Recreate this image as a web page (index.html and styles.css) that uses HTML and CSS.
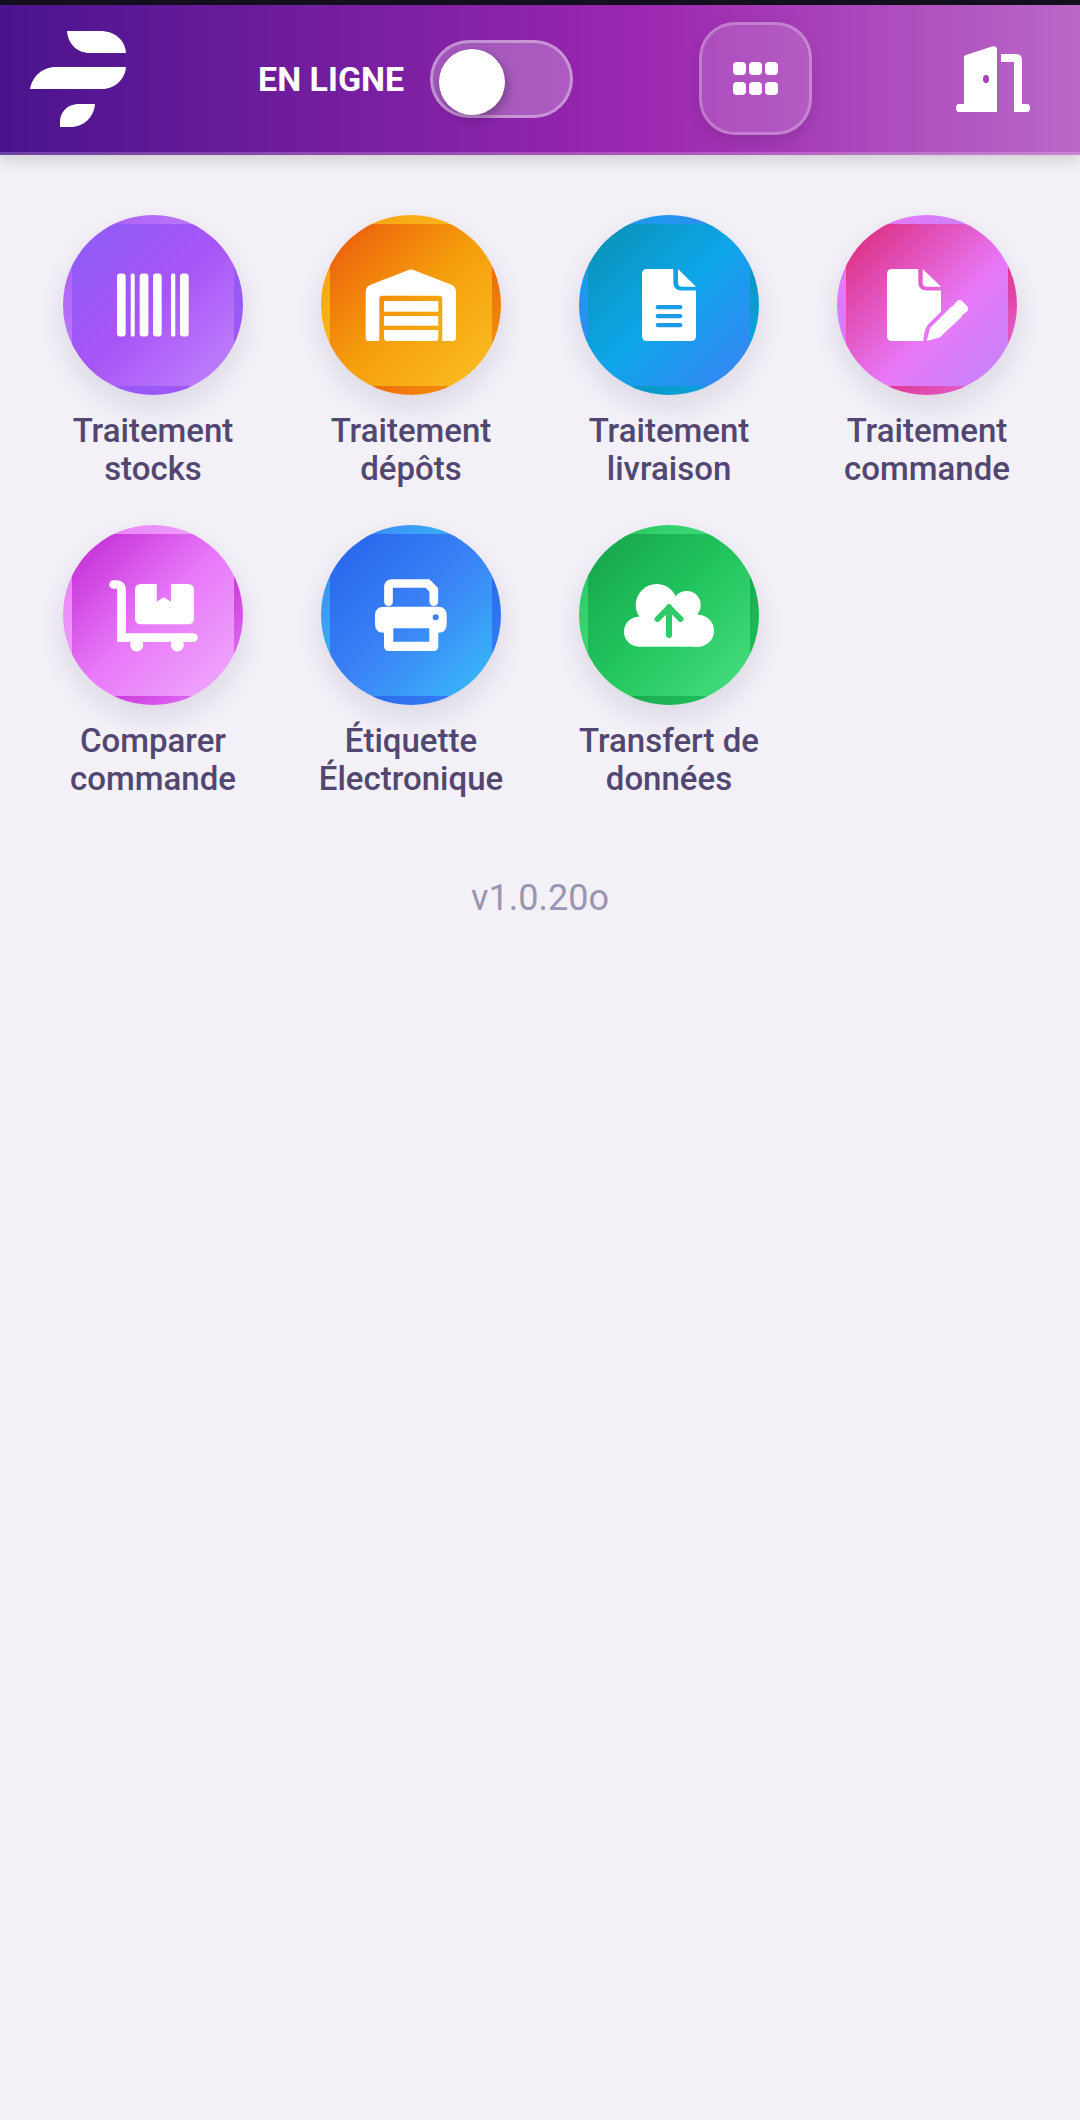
FILE: index.html
```html
<!DOCTYPE html>
<html lang="fr">
<head>
    <meta charset="UTF-8">
    <meta name="viewport" content="width=device-width, initial-scale=1.0">
    <title>Accueil</title>
    <link rel="stylesheet" href="styles.css">
</head>
<body>
    <div class="status-strip"></div>
    <header class="topbar">
        <svg class="logo" viewBox="0 0 96 96" aria-hidden="true">
            <path d="M37 0H70C85 0 95 9 96 22H60C47 22 38 13 37 0Z"/>
            <path d="M26 36H96C95 48 85 58 72 58H0C2 46 12 36 26 36Z"/>
            <path d="M65 73H47C37 74 30 81 30 91V96H40C54 96 64 86 65 73Z"/>
        </svg>
        <span class="status-label">EN LIGNE</span>
        <div class="toggle"><div class="knob"></div></div>
        <button class="menu-btn" type="button" aria-label="Menu">
            <span class="dots">
                <i></i><i></i><i></i><i></i><i></i><i></i>
            </span>
        </button>
        <svg class="door" viewBox="0 0 74 66" aria-hidden="true">
            <path d="M8 58V11Q8 9.500 10 9L36 .5Q41 -.5 41 4V66H3Q0 66 0 62Q0 58 3 58Z"/>
            <path d="M45 8H60Q66 8 66 14V58H71Q74 58 74 62Q74 66 71 66H58V16H45Z"/>
            <ellipse class="keyhole" cx="30" cy="33" rx="3" ry="4"/>
        </svg>
    </header>

    <main class="content">
        <div class="tiles">
            <a class="tile">
                <div class="circle c-stocks">
                    <svg viewBox="0 0 162 162" aria-hidden="true">
                        <rect x="45" y="49.500" width="8.700" height="63" rx="3"/>
                        <rect x="58.700" y="49.500" width="4" height="63" rx="1.500"/>
                        <rect x="67.700" y="49.500" width="8.700" height="63" rx="3"/>
                        <rect x="81" y="49.500" width="8.700" height="63" rx="3"/>
                        <rect x="99" y="49.500" width="4.300" height="63" rx="1.500"/>
                        <rect x="108" y="49.500" width="8.700" height="63" rx="3"/>
                    </svg>
                </div>
                <span class="tile-label">Traitement<br>stocks</span>
            </a>
            <a class="tile">
                <div class="circle c-depots">
                    <svg viewBox="0 0 162 162" aria-hidden="true">
                        <path d="M78.500 46L40 61Q35.700 63 35.700 68V114Q35.700 117 38.700 117H49.300V75Q49.300 71.700 52.600 71.700H109Q112.300 71.700 112.300 75V117H123Q126 117 126 114V68Q126 63 122 61L83.500 46Q81 45 78.500 46Z"/>
                        <rect x="54" y="77" width="54.300" height="10.700"/>
                        <rect x="54" y="92" width="54.300" height="9.700"/>
                        <path d="M54 106H108.300V114Q108.300 117 105.300 117H57Q54 117 54 114Z"/>
                    </svg>
                </div>
                <span class="tile-label">Traitement<br>dépôts</span>
            </a>
            <a class="tile">
                <div class="circle c-livraison">
                    <svg viewBox="0 0 162 162" aria-hidden="true">
                        <path d="M59 45H85.300V58Q85.300 66.500 93.500 66.500H108V112Q108 117 103 117H59Q54 117 54 112V50Q54 45 59 45Z"/>
                        <path d="M90 45L108 62.700H94Q90 62.700 90 59Z"/>
                        <rect class="cut" x="67.700" y="81" width="26.600" height="4.300" rx="2.100"/>
                        <rect class="cut" x="67.700" y="90" width="26.600" height="4.300" rx="2.100"/>
                        <rect class="cut" x="67.700" y="99" width="26.600" height="4.300" rx="2.100"/>
                    </svg>
                </div>
                <span class="tile-label">Traitement<br>livraison</span>
            </a>
            <a class="tile">
                <div class="circle c-commande">
                    <svg viewBox="0 0 162 162" aria-hidden="true">
                        <path d="M46 45H72.300V58Q72.300 66.500 80.500 66.500H95V87.700L83 99.500Q78 104 77.300 117H46Q41 117 41 112V50Q41 45 46 45Z"/>
                        <path d="M76.700 45L95 62.700H81Q76.700 62.700 76.700 59Z"/>
                        <path d="M80.700 117L84 104L105 83L108 81L111 77Q114 75 116.500 77.500L121 82Q123.500 85 121 87.500L117 90.500L115 93.500L93.500 113.500Z"/>
                    </svg>
                </div>
                <span class="tile-label">Traitement<br>commande</span>
            </a>
            <a class="tile">
                <div class="circle c-comparer">
                    <svg viewBox="0 0 162 162" aria-hidden="true">
                        <path class="line" d="M41.500 50.500H44.500Q49.500 50.500 49.500 55.500V103.700H121.300"/>
                        <circle cx="64.700" cy="111" r="6.500"/>
                        <circle cx="105.300" cy="111" r="6.500"/>
                        <path d="M69 50H84.700V67.700L91.700 63.300L99 67.700V50H116Q122 50 122 56V84.300Q122 90.300 116 90.300H69Q63 90.300 63 84.300V56Q63 50 69 50Z"/>
                    </svg>
                </div>
                <span class="tile-label">Comparer<br>commande</span>
            </a>
            <a class="tile">
                <div class="circle c-etiquette">
                    <svg viewBox="0 0 162 162" aria-hidden="true">
                        <path class="line" d="M58.500 67.700V53Q58.500 49.500 62 49.500H97.500L103.800 55.800V67.700"/>
                        <path fill-rule="evenodd" d="M54 72.700H108Q116.700 72.700 116.700 81.400V90Q116.700 98.700 108.300 98.700V112Q108.300 117 103.300 117H59Q54 117 54 112V98.700Q45 98.700 45 90V81.400Q45 72.700 54 72.700ZM63.300 94.300V107.700H99.300V94.300Z"/>
                        <circle class="cut" cx="105.700" cy="83.300" r="3"/>
                    </svg>
                </div>
                <span class="tile-label">Étiquette<br>Électronique</span>
            </a>
            <a class="tile">
                <div class="circle c-transfert">
                    <svg viewBox="0 0 162 162" aria-hidden="true">
                        <circle cx="51" cy="97.700" r="15"/>
                        <circle cx="68.700" cy="71" r="21"/>
                        <circle cx="98.700" cy="71" r="14"/>
                        <circle cx="110" cy="96.700" r="16"/>
                        <rect x="51" y="75" width="59" height="37.700"/>
                        <path class="arrow" d="M81 101V73M69.500 85L81 73.500L92.500 85"/>
                    </svg>
                </div>
                <span class="tile-label">Transfert de<br>données</span>
            </a>
        </div>
        <p class="version">v1.0.20o</p>
    </main>
</body>
</html>
```

FILE: styles.css
```css
body {
    font-family: Roboto, "Liberation Sans", sans-serif;
    background-color: #f3f0f8;
    margin: 0;
    height: 2120px;
    overflow: hidden;
}

.status-strip {
    height: 5px;
    background-color: #14101f;
}

/* barra superior */
.topbar {
    height: 147px;
    display: flex;
    align-items: center;
    background: linear-gradient(90deg, #4a148c 0%, #9c27b0 60%, #ba68c8 100%);
    border-bottom: 3px solid rgba(255, 255, 255, 0.2);
    box-shadow: 0 4px 16px rgba(0, 0, 0, 0.16);
    background-clip: border-box;
}

.logo {
    width: 96px;
    height: 96px;
    margin-left: 30px;
    fill: #fff;
}

.status-label {
    margin-left: 132px;
    width: 147px;
    color: #fff;
    font-size: 34px;
    font-weight: 700;
    white-space: nowrap;
}

.toggle {
    box-sizing: border-box;
    width: 143px;
    height: 78px;
    margin-left: 25px;
    padding: 6px;
    background-color: rgba(255, 255, 255, 0.25);
    border: 3px solid rgba(255, 255, 255, 0.35);
    border-radius: 39px;
}

.knob {
    width: 66px;
    height: 66px;
    border-radius: 50%;
    background-color: #fff;
    box-shadow: 3px 4px 10px rgba(0, 0, 0, 0.25);
}

.menu-btn {
    box-sizing: border-box;
    width: 113px;
    height: 113px;
    margin-left: 126px;
    padding: 0;
    display: flex;
    align-items: center;
    justify-content: center;
    background-color: rgba(255, 255, 255, 0.15);
    border: 3px solid rgba(255, 255, 255, 0.25);
    border-radius: 36px;
    box-shadow: 0 6px 16px rgba(0, 0, 0, 0.12);
}

.dots {
    display: grid;
    grid-template-columns: repeat(3, 13px);
    grid-auto-rows: 13px;
    column-gap: 3px;
    row-gap: 7px;
}

.dots i {
    background-color: #fff;
    border-radius: 4px;
}

.door {
    width: 74px;
    height: 66px;
    margin-left: 144px;
    fill: #fff;
}

.keyhole {
    fill: #a83fb8;
}

/* contenido */
.content {
    padding: 60px 24px 0;
}

.tiles {
    display: grid;
    grid-template-columns: repeat(4, 258px);
    grid-auto-rows: 310px;
}

.tile {
    display: flex;
    flex-direction: column;
    align-items: center;
}

.circle {
    box-sizing: border-box;
    width: 180px;
    height: 180px;
    border: 9px solid transparent;
    border-radius: 50%;
    box-shadow: 0 12px 28px rgba(30, 20, 60, 0.11);
}

.circle svg {
    display: block;
    width: 162px;
    height: 162px;
    fill: #fff;
}

.circle .line {
    fill: none;
    stroke: #fff;
    stroke-width: 8.7;
    stroke-linecap: round;
}

.circle .arrow {
    fill: none;
    stroke: #2ecb67;
    stroke-width: 6;
    stroke-linecap: round;
    stroke-linejoin: round;
}

.c-stocks { background-image: linear-gradient(135deg, #8b5cf6, #a855f7 50%, #c084fc); }
.c-depots { background-image: linear-gradient(135deg, #ea580c, #f59e0b 50%, #fbbf24); }
.c-livraison { background-image: linear-gradient(135deg, #0891b2, #0ea5e9 50%, #3b82f6); }
.c-commande { background-image: linear-gradient(135deg, #db2777, #e879f9 60%, #c084fc); }
.c-comparer { background-image: linear-gradient(135deg, #c026d3, #e879f9 50%, #f0abfc); }
.c-etiquette { background-image: linear-gradient(135deg, #2563eb, #3b82f6 50%, #38bdf8); }
.c-transfert { background-image: linear-gradient(135deg, #16a34a, #22c55e 50%, #4ade80); }

.c-livraison .cut { fill: #1b9ce8; }
.c-etiquette .cut { fill: #3b82f0; }

.tile-label {
    margin-top: 17px;
    color: #524770;
    font-size: 33px;
    font-weight: 500;
    line-height: 38px;
    text-align: center;
    white-space: nowrap;
}

.version {
    margin: 0;
    padding-top: 42px;
    color: #9a95b0;
    font-size: 36px;
    line-height: 42px;
    text-align: center;
}
```
